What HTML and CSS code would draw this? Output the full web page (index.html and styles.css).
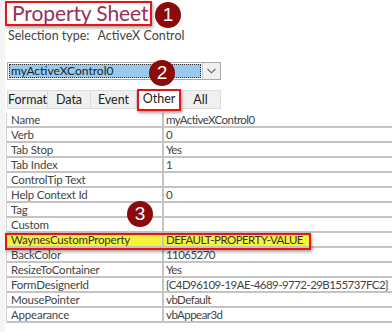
FILE: index.html
```html
<!DOCTYPE html>
<html>
<head>
<meta charset="utf-8">
<link rel="stylesheet" href="styles.css">
</head>
<body>
<div class="page">
  <div class="title-row">
    <div class="title-box">Property Sheet</div>
  </div>
  <div class="seltype"><span class="sel-label">Selection type:</span><span>ActiveX Control</span></div>
  <div class="combo">
    <div class="combo-text"><span class="combo-sel">myActiveXControl0</span></div>
    <div class="combo-btn"><svg width="9" height="6" viewBox="0 0 9 6"><path d="M0.5 0.8 L4.5 4.8 L8.5 0.8" fill="none" stroke="#555" stroke-width="1.1"/></svg></div>
  </div>
  <div class="tabs">
    <div class="tab t-format">Format</div>
    <div class="tab t-data">Data</div>
    <div class="tab t-event">Event</div>
    <div class="tab t-other active">Other</div>
    <div class="tab t-all">All</div>
  </div>
  <div class="grid">
    <div class="row"><div class="k">Name</div><div class="v">myActiveXControl0</div></div>
    <div class="row"><div class="k">Verb</div><div class="v">0</div></div>
    <div class="row"><div class="k">Tab Stop</div><div class="v">Yes</div></div>
    <div class="row"><div class="k">Tab Index</div><div class="v">1</div></div>
    <div class="row"><div class="k">ControlTip Text</div><div class="v"></div></div>
    <div class="row"><div class="k">Help Context Id</div><div class="v">0</div></div>
    <div class="row"><div class="k">Tag</div><div class="v"></div></div>
    <div class="row"><div class="k">Custom</div><div class="v"></div></div>
    <div class="row hl"><div class="k">WaynesCustomProperty</div><div class="v">DEFAULT-PROPERTY-VALUE</div></div>
    <div class="row"><div class="k">BackColor</div><div class="v">11065270</div></div>
    <div class="row"><div class="k">ResizeToContainer</div><div class="v">Yes</div></div>
    <div class="row"><div class="k">FormDesignerId</div><div class="v">{C4D96109-19AE-4689-9772-29B155737FC2}</div></div>
    <div class="row"><div class="k">MousePointer</div><div class="v">vbDefault</div></div>
    <div class="row"><div class="k">Appearance</div><div class="v">vbAppear3d</div></div>
  </div>
  <div class="badge b1">1</div>
  <div class="badge b2">2</div>
  <div class="badge b3">3</div>
  <div class="hlbox"></div>
</div>
</body>
</html>
```
FILE: styles.css
```css
html, body {
  margin: 0;
  padding: 0;
  background: #f4f4f4;
}
.page {
  position: relative;
  width: 392px;
  height: 332px;
  margin-left: 5px;
  background: #ffffff;
  font-family: Lato, "Open Sans", sans-serif;
  color: #444444;
  overflow: hidden;
}
.title-row {
  padding-top: 1px;
  height: 25px;
}
.title-box {
  display: inline-block;
  box-sizing: border-box;
  width: 147px;
  height: 25px;
  border: 2px solid #ee1111;
  box-shadow: 1px 2px 3px rgba(0,0,0,0.35);
  color: #96305a;
  font-size: 21px;
  line-height: 20px;
  padding-left: 5px;
  letter-spacing: -0.1px;
  white-space: nowrap;
}
.seltype {
  display: flex;
  margin-top: 2px;
  margin-left: 3px;
  font-size: 12.5px;
  line-height: 15px;
  color: #444;
}
.sel-label {
  margin-right: 8px;
}
.combo {
  display: flex;
  margin-top: 19px;
  margin-left: 2px;
  width: 214px;
  height: 18px;
  box-sizing: border-box;
  border: 1px solid #a9a9a9;
  background: #fff;
}
.combo-text {
  flex: 1;
  padding: 1px;
  display: flex;
}
.combo-sel {
  flex: 1;
  background: #99c9ef;
  outline: 1px dotted #333;
  outline-offset: -1px;
  font-size: 12px;
  line-height: 14px;
  color: #222;
  padding-left: 2px;
}
.combo-btn {
  width: 17px;
  border-left: 1px solid #c8c8c8;
  background: #f0f0f0;
  display: flex;
  align-items: center;
  justify-content: center;
}
.tabs {
  display: flex;
  margin-top: 10px;
  margin-left: 2px;
  height: 19px;
  align-items: flex-end;
}
.tab {
  box-sizing: border-box;
  height: 19px;
  background: #f0f0f0;
  border: 1px solid #dcdcdc;
  border-left: none;
  font-size: 12.5px;
  line-height: 17px;
  color: #222;
  text-align: center;
}
.t-format { width: 41px; border-left: 1px solid #dcdcdc; }
.t-data { width: 43px; }
.t-event { width: 46px; }
.t-other {
  width: 44px;
  height: 22px;
  background: #ffffff;
  border: 2px solid #ee1111;
  box-shadow: 1px 2px 3px rgba(0,0,0,0.35);
  line-height: 15px;
  position: relative;
  top: 2px;
  z-index: 2;
}
.t-all { width: 40px; }
.grid {
  margin-top: 4px;
  margin-left: 1px;
  width: 385px;
  border-left: 1px solid #d0d0d0;
}
.row {
  display: flex;
  height: 15px;
  box-sizing: border-box;
  border-bottom: 2px solid #c4c4c4;
  font-size: 11.5px;
  line-height: 13px;
}
.k {
  width: 157px;
  box-sizing: border-box;
  padding-left: 4px;
  border-right: 2px solid #c4c4c4;
  white-space: nowrap;
  overflow: hidden;
  letter-spacing: -0.2px;
}
.v {
  flex: 1;
  padding-left: 2px;
  white-space: nowrap;
  overflow: hidden;
  letter-spacing: -0.55px;
}
.row.hl {
  color: #333;
}
.row.hl .k, .row.hl .v {
  background: #f4f43a;
}
.row.hl .v { flex: none; width: 144px; }
.hlbox {
  position: absolute;
  left: 0px;
  top: 233px;
  width: 306px;
  height: 17px;
  box-sizing: border-box;
  border: 2px solid #ee1111;
  box-shadow: 1px 2px 3px rgba(0,0,0,0.35);
}
.badge {
  position: absolute;
  width: 26px;
  height: 26px;
  border-radius: 50%;
  background: #8b0a0a;
  color: #ffffff;
  font-family: "Liberation Sans", sans-serif;
  font-size: 19px;
  line-height: 26px;
  text-align: center;
}
.b1 { left: 150px; top: 2px; }
.b2 { left: 144px; top: 60px; }
.b3 { left: 122px; top: 201px; }
```
